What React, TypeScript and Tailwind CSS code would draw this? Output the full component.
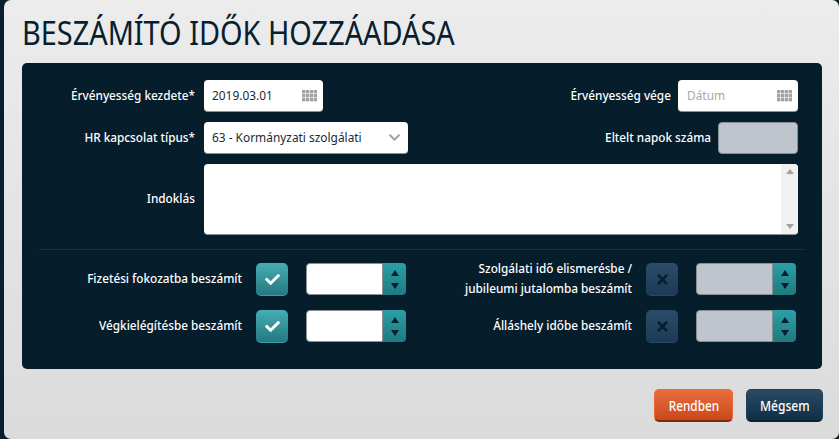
import React from 'react';
import { FaCheck, FaTimes, FaChevronDown } from 'react-icons/fa';

const GridIcon = () => (
  <svg width="15" height="12" viewBox="0 0 15 12" className="shrink-0">
    {[0, 4, 8].map(y =>
      [0, 4, 8, 12].map(x => (
        <rect key={`${x}-${y}`} x={x} y={y} width="3.4" height="3.4" fill="#a3a3a3" />
      ))
    )}
  </svg>
);

const Spinner = ({ disabled }: { disabled?: boolean }) => (
  <div className="flex w-[100px] h-[32px]">
    <div className={`w-[77px] rounded-l-[4px] border border-[#8a8f94] ${disabled ? 'bg-[#bfc5cc]' : 'bg-white'}`}></div>
    <div className="w-[23px] rounded-r-[4px] bg-gradient-to-b from-[#2ba0a8] to-[#1f7a7e] flex flex-col items-center justify-center gap-[7px]">
      <div className="w-0 h-0 border-l-[4px] border-r-[4px] border-b-[6px] border-l-transparent border-r-transparent border-b-[#06202f]"></div>
      <div className="w-0 h-0 border-l-[4px] border-r-[4px] border-t-[6px] border-l-transparent border-r-transparent border-t-[#06202f]"></div>
    </div>
  </div>
);

const CheckOn = () => (
  <div className="w-[32px] h-[33px] rounded-[5px] bg-gradient-to-b from-[#46aeb4] to-[#23797f] border-b border-[#39a0a5] flex items-center justify-center">
    <FaCheck size={15} className="text-white" />
  </div>
);

const CheckOff = () => (
  <div className="w-[32px] h-[33px] rounded-[5px] bg-gradient-to-b from-[#2b4c68] to-[#1c3a54] border-b border-[#264a66] flex items-center justify-center">
    <FaTimes size={15} className="text-[#07202f]" />
  </div>
);

// the reference font is narrower than anything installed, so the text is squeezed
const Label = ({ children, className = '' }: { children: React.ReactNode; className?: string }) => (
  <label className={`text-white text-[13px] font-medium text-right leading-[20px] pb-[3px] whitespace-nowrap origin-right scale-x-[0.905] ${className}`}>{children}</label>
);

const Value = ({ children }: { children: React.ReactNode }) => (
  <span className="inline-block whitespace-nowrap origin-left scale-x-[0.915]">{children}</span>
);

export default function App() {
  return (
    <div className="w-[839px] h-[439px] bg-[#06202f] overflow-hidden pl-[4px] font-['Noto_Sans','Open_Sans',sans-serif]">
      <div className="h-full rounded-[7px] bg-gradient-to-b from-[#ececec] to-[#dbdbdb] pl-[18px] pr-[17px] flex flex-col">
        <h1 className="text-[33px] leading-[40px] pt-[13px] h-[63px] text-[#06202f] whitespace-nowrap origin-left scale-x-[0.875]">BESZÁMÍTÓ IDŐK HOZZÁADÁSA</h1>

        <div className="w-[800px] h-[306px] rounded-[5px] bg-[#061d2c] pt-[17px] px-[17px] flex flex-col">
          <div className="flex items-center h-[32px] gap-[9px]">
            <Label className="w-[156px]">Érvényesség kezdete*</Label>
            <div className="w-[119px] h-[32px] rounded-[4px] bg-white border-b border-[#8a8f94] pl-[8px] pr-[6px] flex items-center justify-between text-[13px] text-[#1d2a33]">
              <Value>2019.03.01</Value>
              <GridIcon />
            </div>
            <Label className="ml-auto">Érvényesség vége</Label>
            <div className="w-[120px] h-[32px] rounded-[4px] bg-white border-b border-[#8a8f94] pl-[9px] pr-[6px] flex items-center justify-between text-[13px] text-[#a9a9a9] mr-[7px] -ml-[2px]">
              <Value>Dátum</Value>
              <GridIcon />
            </div>
          </div>

          <div className="flex items-center h-[32px] mt-[10px] gap-[9px]">
            <Label className="w-[156px]">HR kapcsolat típus*</Label>
            <div className="w-[204px] h-[32px] rounded-[4px] bg-white border-b border-[#8a8f94] pl-[8px] pr-[7px] flex items-center justify-between text-[13px] text-[#1d2a33]">
              <Value>63 - Kormányzati szolgálati</Value>
              <FaChevronDown size={13} className="text-[#a3a3a3]" />
            </div>
            <Label className="ml-auto">Eltelt napok száma</Label>
            <div className="w-[80px] h-[32px] rounded-[4px] bg-[#bfc5cc] border border-[#8a8f94] mr-[7px] -ml-[2px]"></div>
          </div>

          <div className="flex items-center mt-[10px] gap-[9px]">
            <Label className="w-[156px]">Indoklás</Label>
            <div className="w-[594px] h-[71px] rounded-[4px] bg-white border-b border-[#8a8f94] flex justify-end overflow-hidden">
              <div className="w-[17px] bg-[#f1f1f1] flex flex-col items-center justify-between py-[5px]">
                <div className="w-0 h-0 border-l-[4px] border-r-[4px] border-b-[5px] border-l-transparent border-r-transparent border-b-[#a3a3a3]"></div>
                <div className="w-0 h-0 border-l-[4px] border-r-[4px] border-t-[5px] border-l-transparent border-r-transparent border-t-[#a3a3a3]"></div>
              </div>
            </div>
          </div>

          <div className="h-px bg-[#12344a] mt-[14px] w-[766px]"></div>

          <div className="flex items-start h-[33px] mt-[13px]">
            <Label className="w-[203px] self-center">Fizetési fokozatba beszámít</Label>
            <div className="ml-[14px]"><CheckOn /></div>
            <div className="ml-[18px]"><Spinner /></div>
            <Label className="w-[226px] self-center">Szolgálati idő elismerésbe /<br />jubileumi jutalomba beszámít</Label>
            <div className="ml-[14px]"><CheckOff /></div>
            <div className="ml-[18px]"><Spinner disabled /></div>
          </div>

          <div className="flex items-start h-[33px] mt-[14px]">
            <Label className="w-[203px] self-center">Végkielégítésbe beszámít</Label>
            <div className="ml-[14px]"><CheckOn /></div>
            <div className="ml-[18px]"><Spinner /></div>
            <Label className="w-[226px] self-center">Álláshely időbe beszámít</Label>
            <div className="ml-[14px]"><CheckOff /></div>
            <div className="ml-[18px]"><Spinner disabled /></div>
          </div>
        </div>

        <div className="flex justify-end gap-[13px] mt-[20px] -mr-px">
          <button className="w-[79px] h-[33px] rounded-[5px] bg-gradient-to-b from-[#ea6d3d] to-[#c9481a] border border-b-2 border-[#e8693a] border-b-[#7a2c10] text-white text-[14px] font-medium"><span className="inline-block scale-x-[0.84]">Rendben</span></button>
          <button className="w-[77px] h-[33px] rounded-[5px] bg-gradient-to-b from-[#2b4a63] to-[#0f2f47] border border-b-2 border-[#1d3f59] border-b-[#0a2233] text-white text-[14px] font-medium"><span className="inline-block scale-x-[0.86]">Mégsem</span></button>
        </div>
      </div>
    </div>
  );
}
